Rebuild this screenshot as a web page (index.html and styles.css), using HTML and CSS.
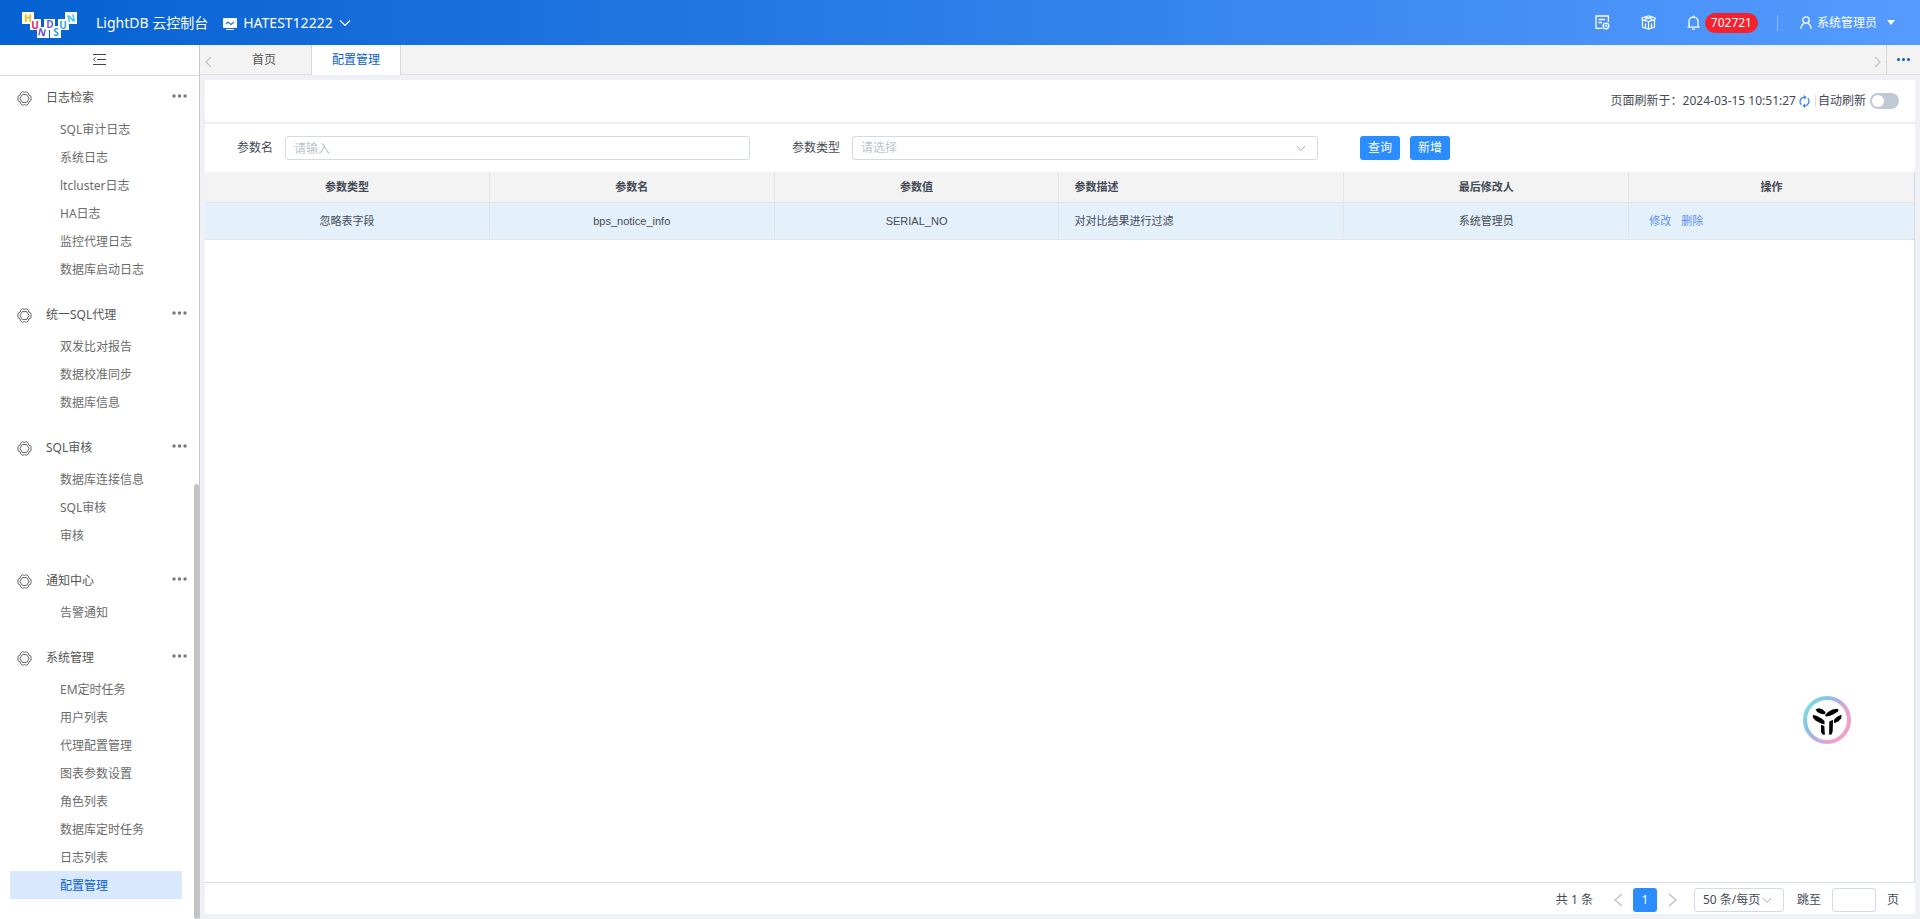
FILE: index.html
```html
<!DOCTYPE html>
<html lang="zh-CN">
<head>
<meta charset="utf-8">
<title>LightDB 云控制台</title>
<link rel="stylesheet" href="styles.css">
</head>
<body>
<header class="topbar">
  <svg class="logo" width="56" height="28" viewBox="0 0 56 28" role="img" aria-label="HUNDSUN">
    <g fill="#fff"><rect x="0" y="1" width="12" height="12"/><rect x="8" y="8" width="11" height="11"/><rect x="15" y="16" width="12" height="11"/><rect x="22" y="8" width="11" height="11"/><rect x="28" y="15" width="11" height="12"/><rect x="36" y="8" width="11" height="11"/><rect x="43" y="1" width="12" height="12"/></g>
    <text class="logo-letter" x="6" y="11" fill="#f7b500">H</text>
    <text class="logo-letter" x="13" y="18" fill="#e0246c">U</text>
    <text class="logo-letter" x="20" y="25" fill="#6b4fc4" transform="rotate(12 20 21)">N</text>
    <text class="logo-letter" x="28" y="17" fill="#6a5cd0">D</text>
    <text class="logo-letter" x="34" y="25" fill="#28a4e0">S</text>
    <text class="logo-letter" x="41" y="18" fill="#35a8dc">U</text>
    <text class="logo-letter" x="49" y="11" fill="#3cc0e8" transform="rotate(-12 49 7)">N</text>
  </svg>
  <span class="product">LightDB 云控制台</span>
  <button class="cluster" type="button">
    <svg class="cluster-icon" width="14" height="12" viewBox="0 0 14 12"><rect width="14" height="10" rx="1" fill="#fff"/><path d="M3 6l2-2 3 2.500L11 4" fill="none" stroke="#2a75dc" stroke-width="1.200"/><path d="M3 11.500h8" stroke="#fff"/></svg>
    <span>HATEST12222</span>
    <svg width="12" height="8" viewBox="0 0 12 8"><path d="M1 1.500l5 5 5-5" fill="none" stroke="#fff" stroke-width="1.200"/></svg>
  </button>
  <div class="tools">
    <button class="tool" type="button" aria-label="任务"><svg width="15" height="15" viewBox="0 0 15 15" fill="none" stroke="#fff" stroke-width="1.300"><path d="M13.400 7V1H1v12.400h6.500M3.500 4.500H10M3.500 7.500H7"/><circle cx="11" cy="11" r="2.800"/><path d="M11 9.500v1.700h1.300"/></svg></button>
    <button class="tool" type="button" aria-label="组件"><svg width="15" height="15" viewBox="0 0 15 15" fill="none" stroke="#fff" stroke-width="1.200"><path d="M7.500 .8L14 3v1.500L7.500 6.500 1 4.500V3zM4.200 2l6.500 2.200v1.300M10.800 2L4.300 4.200v1.300M1.500 5v7l6 2.200 6-2.200V5M7.500 6.500v7.700M4.500 8.500v4M10.500 8.500v4"/></svg></button>
    <button class="tool bell" type="button"><svg width="13" height="15" viewBox="0 0 13 15" fill="none" stroke="#fff" stroke-width="1.300"><path d="M.5 12.200h12M2 12V6.500C2 4 4 2 6.500 2S11 4 11 6.500V12M6.500 2V.500M5 14.200h3"/></svg><span class="badge">702721</span></button>
    <span class="tool-divider"></span>
    <button class="tool user" type="button"><svg width="12" height="13" viewBox="0 0 12 13" fill="none" stroke="#fff" stroke-width="1.300"><circle cx="6" cy="4" r="3.200"/><path d="M1 12.800c0-2.600 1.300-4.600 3.200-5.300M11 12.800c0-2.600-1.300-4.600-3.200-5.300"/></svg><span>系统管理员</span><svg class="caret" width="8" height="5" viewBox="0 0 8 5"><path d="M0 0h8L4 5z" fill="#fff"/></svg></button>
  </div>
</header>
<div class="body">
  <aside class="sidebar">
    <button class="collapse" type="button" aria-label="收起菜单"><svg width="13" height="11" viewBox="0 0 13 11" stroke="#444" fill="none"><path d="M0 .500h13M4 5.500h9M0 10.500h13M2.500 3.500l-2 2 2 2"/></svg></button>
    <nav class="menu" id="menu"></nav>
    <span class="scroll-thumb"></span>
  </aside>
  <main class="main">
    <div class="tabs">
      <button class="tab-nav" type="button" aria-label="向左"><svg width="7" height="12" viewBox="0 0 7 12"><path d="M6 1L1 6l5 5" fill="none" stroke="#c0c4cc" stroke-width="1.200"/></svg></button>
      <button class="tab tab-home" type="button">首页</button>
      <button class="tab tab-active" type="button">配置管理</button>
      <button class="tab-nav tab-next" type="button" aria-label="向右"><svg width="7" height="12" viewBox="0 0 7 12"><path d="M1 1l5 5-5 5" fill="none" stroke="#c0c4cc" stroke-width="1.200"/></svg></button>
      <button class="tab-more" type="button" aria-label="更多"><svg width="13" height="3" viewBox="0 0 13 3" fill="#1059c8"><circle cx="1.500" cy="1.500" r="1.500"/><circle cx="6.500" cy="1.500" r="1.500"/><circle cx="11.500" cy="1.500" r="1.500"/></svg></button>
    </div>
    <section class="refresh">
      <span>页面刷新于：2024-03-15 10:51:27</span>
      <button class="reload" type="button" aria-label="刷新"><svg width="11" height="13" viewBox="0 0 11 13"><path d="M2.300 9.800A4.500 4.500 0 0 1 5.500 2.200M8.700 3.200a4.500 4.500 0 0 1-3.200 7.600" fill="none" stroke="#3a85f5" stroke-width="1.300"/><path d="M5 0l2.600 2.200L5 4.400zM6 8.600V13l-2.600-2.200z" fill="#3a85f5"/></svg></button>
      <span class="refresh-divider"></span>
      <label for="auto">自动刷新</label>
      <input class="switch" type="checkbox" id="auto" role="switch">
    </section>
    <section class="panel">
      <form class="filters">
        <div class="field"><label for="pname">参数名</label><input class="control" id="pname" type="text" placeholder="请输入"></div>
        <div class="field field-type"><label for="ptype">参数类型</label>
          <span class="select-box"><select class="control" id="ptype"><option>请选择</option></select><svg width="10" height="7" viewBox="0 0 10 7"><path d="M1 1l4 4.500L9 1" fill="none" stroke="#a6abb5"/></svg></span></div>
        <div class="actions"><button class="primary" type="button">查询</button><button class="primary" type="button">新增</button></div>
      </form>
      <div class="table-wrap">
        <table>
          <thead><tr><th>参数类型</th><th>参数名</th><th>参数值</th><th class="left">参数描述</th><th>最后修改人</th><th>操作</th></tr></thead>
          <tbody><tr><td>忽略表字段</td><td>bps_notice_info</td><td>SERIAL_NO</td><td class="left">对对比结果进行过滤</td><td>系统管理员</td><td class="ops"><a href="#">修改</a><a href="#">删除</a></td></tr></tbody>
        </table>
      </div>
      <footer class="pager">
        <span>共 1 条</span>
        <button class="page-arrow page-prev" type="button" aria-label="上一页"><svg width="9" height="14" viewBox="0 0 9 14"><path d="M8 1L1 7l7 6" fill="none" stroke="#bcbfc5" stroke-width="1.300"/></svg></button>
        <button class="page-current" type="button">1</button>
        <button class="page-arrow page-next" type="button" aria-label="下一页"><svg width="9" height="14" viewBox="0 0 9 14"><path d="M1 1l7 6-7 6" fill="none" stroke="#bcbfc5" stroke-width="1.300"/></svg></button>
        <span class="select-box size-box"><select class="control" aria-label="每页条数"><option>50 条/每页</option></select><svg width="10" height="7" viewBox="0 0 10 7"><path d="M1 1l4 4.500L9 1" fill="none" stroke="#a6abb5"/></svg></span>
        <label for="jump">跳至</label><input class="control jump" id="jump" type="text"><span>页</span>
      </footer>
    </section>
  </main>
</div>
<button class="assistant" type="button" aria-label="助手"><svg width="48" height="48" viewBox="0 0 48 48"><defs><linearGradient id="ring" x1="0" y1=".2" x2="1" y2=".8"><stop offset="0" stop-color="#7cdde0"/><stop offset=".25" stop-color="#86c4e0"/><stop offset=".5" stop-color="#b9ade8"/><stop offset=".8" stop-color="#efa0cc"/><stop offset="1" stop-color="#f0a0c8"/></linearGradient></defs><circle cx="24" cy="24" r="22" fill="#fff" stroke="url(#ring)" stroke-width="4"/><path d="M12.500 13.500l3-1.200 3.500.7 3.500 3-.5 2.300-3.500-.3-4-1.800zM22 19l3-3 4.500-2.500 4.500-.7 1.700 1-1 2-4.200 2.500-4 1.800-3.500.4zM9.800 18.700l4.200 1.300 5 2.700 2.500 2.300v3.500l-4-1.200-5-2.800-2.500-2.800zM31 27.300v-3.500l3-3 4.500-2-.3 3.700-3 3zM18 28.800l3.300 1.200.6 8.800h-2l-1.900-2.500zM26.300 25.500l3.700-1.700-.3 11.700-1.200 3-2.400.3z"/></svg></button>
<script src="menu.js"></script>
</body>
</html>
```
FILE: styles.css
```css
* { box-sizing: border-box; }
body {
  margin: 0; height: 100vh; display: flex; flex-direction: column; overflow: hidden;
  font: 12px/20px "Noto Sans", "Noto Sans CJK SC", sans-serif; color: #444a55; background: #f0f1f6;
}
button, input, select { font: inherit; color: inherit; margin: 0; }
button { border: 0; padding: 0; background: none; display: flex; align-items: center; justify-content: center; cursor: pointer; }
svg { display: block; flex: none; }
a { text-decoration: none; }

.topbar {
  flex: none; height: 45px; display: flex; align-items: center; padding: 0 25px 0 22px; color: #fff;
  background: linear-gradient(90deg, #0561d1, #559bff);
}
.logo { margin-top: 5px; }
.logo-letter { font: bold 10px "Open Sans", sans-serif; text-anchor: middle; }
.product { margin-left: 18px; font-size: 14px; }
.cluster { margin-left: 15px; gap: 6px; font-size: 14px; }
.cluster-icon { margin-top: 3px; }
.tools { margin-left: auto; display: flex; align-items: center; }
.tool { margin-left: 31px; }
.bell { gap: 5px; }
.badge { height: 20px; padding: 0 6px; border-radius: 10px; background: #f5222d; }
.tool-divider { width: 1px; height: 16px; margin-left: 19px; background: #8dbbff; }
.user { margin-left: 22px; gap: 5px; }
.caret { margin-left: 5px; }

.body { flex: 1; min-height: 0; display: flex; }
.sidebar { position: relative; flex: none; width: 200px; background: #fff; border-right: 1px solid #c8c8c8; display: flex; flex-direction: column; }
.collapse { flex: none; width: 100%; height: 31px; padding-bottom: 2px; border-bottom: 1px solid #d9d9d9; }
.menu { flex: 1; min-height: 0; overflow: hidden; padding: 3px 12px 0 10px; }
.group { margin-bottom: 13px; }
.group-head { height: 36px; display: flex; align-items: center; padding: 2px 0 0 7px; color: #555; }
.group-name { margin-left: 14px; }
.group-more { width: 15px; margin: -4px 0 0 auto; }
.item { display: block; width: 172px; height: 28px; line-height: 30px; padding-left: 50px; color: #6b6b6b; }
.item-active { color: #0a5ed0; background: #d8e9fd; }
.scroll-thumb { position: absolute; right: 0; top: 439px; bottom: 0; width: 5px; border-radius: 3px; background: #c3c3c3; }

.main { flex: 1; min-width: 0; display: flex; flex-direction: column; padding-bottom: 5px; }
.tabs { flex: none; height: 30px; display: flex; background: #f3f3f3; border-bottom: 1px solid #dfe0e2; }
.tab { height: 29px; padding: 0 20px; color: #555; border-right: 1px solid #d5d5d5; }
.tab-home { padding: 0 35px; }
.tab-active { height: 30px; padding-bottom: 1px; background: #fff; color: #0a5ed0; }
.tab-nav { width: 17px; padding-top: 4px; }
.tab-next { margin-left: auto; }
.tab-more { width: 34px; border-left: 1px solid #d5d5d5; }

.refresh { flex: none; height: 42px; margin: 5px 5px 2px; padding-right: 16px; background: #fff; border-radius: 2px; display: flex; align-items: center; justify-content: flex-end; }
.reload { margin: 0 5px 0 3px; }
.refresh-divider { width: 1px; height: 12px; margin-right: 2px; background: #dcdfe6; }
.switch { appearance: none; width: 29px; height: 16px; margin-left: 4px; border-radius: 8px; background: #c0c8d4; display: flex; align-items: center; padding: 2px; }
.switch::before { content: ""; width: 12px; height: 12px; border-radius: 50%; background: #fff; }

.panel { flex: 1; min-height: 0; margin: 0 5px; background: #fff; display: flex; flex-direction: column; }
.filters { flex: none; height: 48px; display: flex; align-items: center; padding-left: 32px; }
.field { flex: 0 1 513px; display: flex; align-items: center; gap: 12px; }
.field-type { flex-basis: 526px; margin-left: 42px; }
.control { width: 100%; height: 24px; padding: 0 8px; border: 1px solid #d5dbe6; border-radius: 3px; background: #fff; outline: 0; appearance: none; }
.field label { flex: none; }
.field .control, .field .control::placeholder { color: #bcc3cf; }
.field > .control { flex: 1; min-width: 0; }
.select-box { position: relative; flex: 1; display: flex; }
.select-box svg { position: absolute; right: 12px; top: 9px; pointer-events: none; }
.actions { margin-left: 42px; display: flex; gap: 10px; }
.primary { width: 40px; height: 24px; border-radius: 3px; background: #2a8cff; color: #fff; }

.table-wrap { flex: 1; min-height: 0; border-right: 1px solid #d5dbe4; border-bottom: 1px solid #d5dbe4; }
table { width: 100%; table-layout: fixed; border-collapse: separate; border-spacing: 0; font: 11px/18px "Liberation Sans", "Noto Sans CJK SC", sans-serif; }
th, td { padding: 0 15px; text-align: center; border-right: 1px solid #e3e4e6; border-bottom: 1px solid #e3e4e6; }
th { height: 31px; background: #f3f3f3; font-weight: bold; }
td { height: 37px; background: #e4f1fb; }
th:last-child, td:last-child { border-right: 0; }
.left { text-align: left; }
.ops { text-align: left; padding-left: 20px; }
.ops a { margin-right: 10px; color: #5b8ff0; }

.pager { flex: none; height: 31px; display: flex; align-items: center; justify-content: flex-end; padding: 3px 16px 0 0; }
.page-arrow { width: 9px; }
.page-prev { margin: 0 10px 0 21px; }
.page-next { margin: 0 17px 0 11px; }
.page-current { width: 24px; height: 24px; border-radius: 3px; background: #2a8cff; color: #fff; }
.size-box { flex: none; width: 90px; margin-right: 13px; }
.jump { width: 44px; margin: 0 11px; }

.assistant { position: absolute; right: 69px; bottom: 175px; border-radius: 50%; }
```
FILE: menu.js
```js
const groups = [
  ["日志检索", ["SQL审计日志", "系统日志", "ltcluster日志", "HA日志", "监控代理日志", "数据库启动日志"]],
  ["统一SQL代理", ["双发比对报告", "数据校准同步", "数据库信息"]],
  ["SQL审核", ["数据库连接信息", "SQL审核", "审核"]],
  ["通知中心", ["告警通知"]],
  ["系统管理", ["EM定时任务", "用户列表", "代理配置管理", "图表参数设置", "角色列表", "数据库定时任务", "日志列表", "配置管理"]]
];
const gear = '<svg width="15" height="15" viewBox="0 0 15 15" fill="none" stroke="#666"><path d="M5.200 3.600h4.600L12 7.500l-2.200 3.900H5.200L3 7.500z"/><path d="M3.500 2.300L5.600.7l1.900.7 1.900-.7 2.100 1.600.3 1.700 2.200 1.300v4.400l-2.200 1.300-.3 1.700-2.100 1.600-1.900-.7-1.900.7-2.100-1.600-.3-1.700L1 9.700V5.300L3.200 4z"/></svg>';
const dots = '<svg width="15" height="4" viewBox="0 0 15 4" fill="#777"><circle cx="2" cy="2" r="1.700"/><circle cx="7.500" cy="2" r="1.700"/><circle cx="13" cy="2" r="1.700"/></svg>';
document.getElementById("menu").innerHTML = groups.map(([name, items], g) =>
  `<div class="group"><div class="group-head">${gear}<span class="group-name">${name}</span><button class="group-more" type="button" aria-label="更多">${dots}</button></div>` +
  items.map((item, i) => `<a class="item${g === 4 && i === 7 ? " item-active" : ""}" href="#">${item}</a>`).join("") + "</div>"
).join("");
```
